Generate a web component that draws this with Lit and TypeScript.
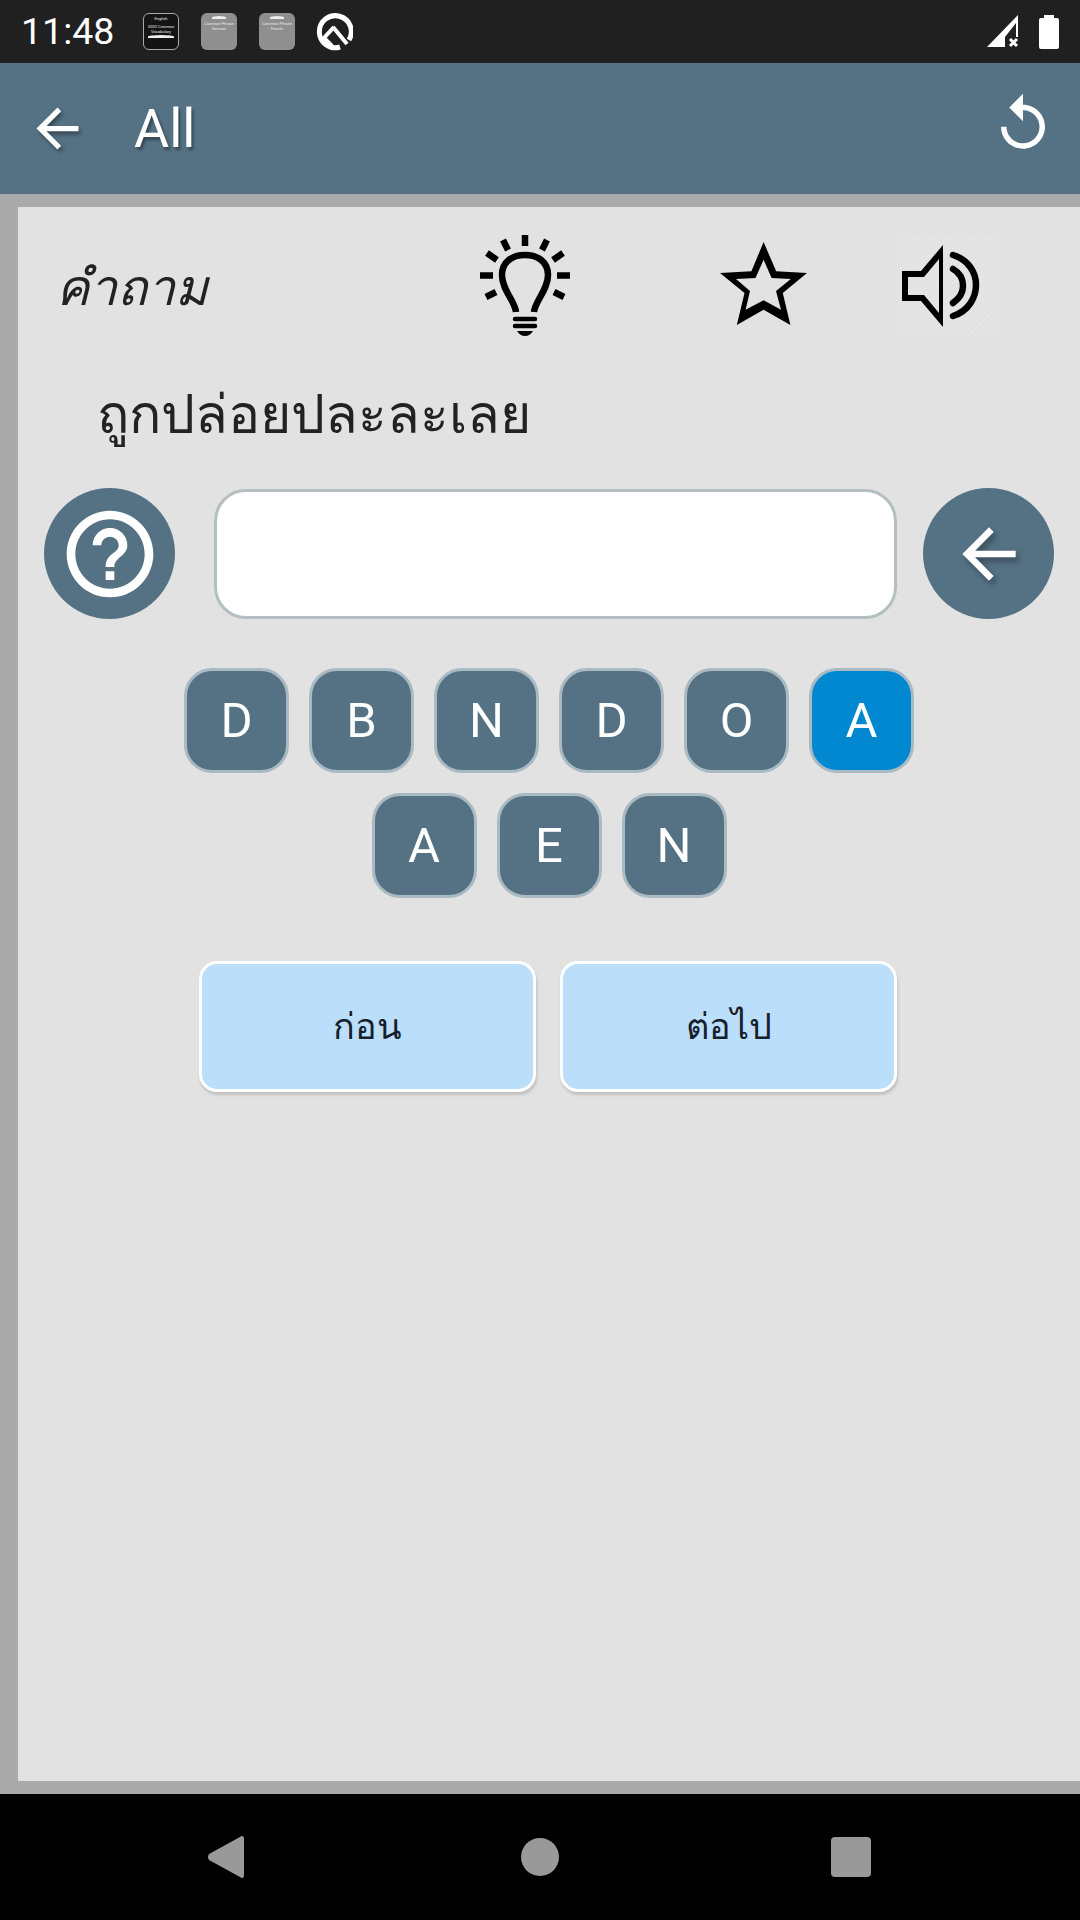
import { LitElement, html, css, svg } from 'lit';
import { customElement, state } from 'lit/decorators.js';

const ARROW = 'M20 11H7.830l5.590-5.590L12 4l-8 8 8 8 1.410-1.410L7.830 13H20v-2z';
const HELP = 'M11 18h2v-2h-2v2zm1-16C6.480 2 2 6.480 2 12s4.480 10 10 10 10-4.480 10-10S17.520 2 12 2zm0 18c-4.410 0-8-3.590-8-8s3.590-8 8-8 8 3.590 8 8-3.590 8-8 8zm0-14c-2.210 0-4 1.790-4 4h2c0-1.100.9-2 2-2s2 .9 2 2c0 2-3 1.750-3 5h2c0-2.250 3-2.500 3-5 0-2.210-1.790-4-4-4z';
const REPLAY = 'M12 5V1L7 6l5 5V7c3.310 0 6 2.690 6 6s-2.690 6-6 6-6-2.690-6-6H4c0 4.420 3.580 8 8 8s8-3.580 8-8-3.580-8-8-8z';

const bulb = svg`
  <g fill="none" stroke="#000" stroke-width="6.500">
    <path d="M36 77C35 66 22 55 22 40 22 27 32 20 45 20S68 27 68 40C68 55 55 66 54 77" />
    <path d="M45 0V11M0 40.500H13M77 40.500H90M23 5 28 15M67 5 62 15M7 18 17 25M83 18 73 25M6 62 16 57M84 62 74 57" />
    <path d="M35 84H55M35 91H55" stroke-width="4.500" stroke-linecap="round" />
  </g>
  <path d="M37 96H53Q50 101 45 101T37 96Z" />
`;

const star = svg`
  <path fill-rule="evenodd" d="M43.600 0 56.200 29.300 87 31 62.800 51 70.400 83 43.600 67.700 16.800 83 24.500 51 0 31 31.400 29.300ZM43.600 17.700 35.500 36 16 37 30 49 25.600 67.700 43.600 58.300 61 67.700 56 49 70.800 37 51.600 36Z" />
`;

const speaker = svg`
  <path fill-rule="evenodd" d="M7 36H26L48 10V92L26 66H7ZM13 42V60H29L44 78V24L29 42Z" />
  <path d="M58 20C74 25 81 38 81 50S74 76 58 81M58 34C65 38 68 44 68 51S65 63 58 68" fill="none" stroke="#000" stroke-width="6.500" stroke-linecap="round" />
`;

@customElement('app-root')
export class AppRoot extends LitElement {
  static styles = css`
    :host {
      display: block;
      font-family: Roboto, "Noto Sans", "DejaVu Sans", sans-serif;
    }
    .screen {
      width: 1080px;
      height: 1920px;
      display: flex;
      flex-direction: column;
      background: #aaa;
    }

    .status {
      height: 63px;
      background: #202020;
      color: #fff;
      display: flex;
      align-items: center;
      flex: none;
    }
    .time {
      font-size: 37.500px;
      margin-left: 21px;
      width: 122px;
      line-height: 63px;
    }
    .mini {
      width: 36px;
      height: 37px;
      margin-right: 22px;
      border-radius: 6px;
      background: #8f8f8f;
      color: #e8e8e8;
      font-size: 4px;
      line-height: 5px;
      text-align: center;
      display: flex;
      flex-direction: column;
      align-items: center;
      box-sizing: border-box;
      overflow: hidden;
      white-space: nowrap;
      padding-top: 3px;
    }
    .mini.dark {
      background: #141414;
      border: 1px solid #aaa;
      padding-top: 2px;
    }
    .mini .band {
      width: 14px;
      height: 3px;
      background: #eee;
      border-radius: 50% 50% 0 0;
      margin-bottom: 2px;
      flex: none;
    }
    .mini.dark .band {
      width: 26px;
      height: 3px;
      margin: 1px 0;
    }
    .mini .gap { height: 3px; flex: none; }
    .q { margin-left: -2px; }
    .status-right {
      margin-left: auto;
      display: flex;
      align-items: center;
      gap: 19px;
      margin-right: 21px;
    }

    .appbar {
      height: 131px;
      background: #557285;
      display: flex;
      align-items: center;
      flex: none;
      color: #fff;
    }
    .appbar .back {
      margin-left: 26px;
      width: 63px;
      height: 63px;
      fill: #fff;
      filter: drop-shadow(2px 3px 2px rgba(0, 0, 0, 0.4));
    }
    .appbar h1 {
      margin: 0 0 0 45px;
      font-size: 54px;
      font-weight: 400;
      text-shadow: 2px 3px 3px rgba(0, 0, 0, 0.4);
    }
    .appbar .replay {
      margin: 0 24px 10px auto;
      width: 66px;
      height: 66px;
      fill: #fff;
    }

    .body {
      flex: 1;
      padding: 13px 0 13px 18px;
      display: flex;
    }
    .panel {
      flex: 1;
      background: #e2e2e2;
      display: flex;
      flex-direction: column;
    }

    .tools {
      display: flex;
      align-items: flex-start;
      padding: 28px 0 0 38px;
      height: 102px;
    }
    .tools .label {
      width: 424px;
      font-size: 50px;
      font-style: italic;
      color: #222;
      line-height: 60px;
      margin-top: 23px;
    }
    .tools svg { display: block; flex: none; }
    .star { margin: 7px 0 0 150px; }
    .sound {
      margin-left: 88px;
      background: repeating-linear-gradient(135deg, #e2e2e2 0 2px, #e5e5e5 2px 4px);
    }

    .question {
      margin: 45px 0 0 79px;
      font-size: 53.500px;
      line-height: 66px;
      color: #222;
    }

    .answer {
      display: flex;
      align-items: center;
      margin: 40px 0 0 26px;
    }
    .round {
      width: 131px;
      height: 131px;
      border-radius: 50%;
      background: #557285;
      flex: none;
      padding: 0;
      border: 0;
      display: flex;
      align-items: center;
      justify-content: center;
      fill: #fff;
    }
    .round.next svg {
      filter: drop-shadow(3px 4px 3px rgba(0, 0, 0, 0.35));
    }
    .field {
      width: 683px;
      height: 130px;
      box-sizing: border-box;
      margin: 0 26px 0 39px;
      background: #fff;
      border: 3px solid #b4bfc2;
      border-radius: 32px;
    }

    .tiles {
      display: flex;
      flex-wrap: wrap;
      justify-content: center;
      gap: 20px;
      width: 730px;
      margin: 49px 0 0 166px;
    }
    .tile {
      width: 105px;
      height: 105px;
      box-sizing: border-box;
      padding: 0;
      border: 3px solid #a9bac3;
      border-radius: 28px;
      background: #557285;
      color: #fff;
      font: 400 49px Roboto, sans-serif;
      display: flex;
      align-items: center;
      justify-content: center;
    }
    .tile.active { background: #0288d1; }

    .nav-btns {
      display: flex;
      gap: 24px;
      margin: 63px 0 0 181px;
    }
    .nav-btns button {
      width: 337px;
      height: 131px;
      box-sizing: border-box;
      padding: 0;
      border: 3px solid #fff;
      border-radius: 18px;
      background: #bbdefb;
      color: #15202b;
      font: 400 36px Roboto, "Noto Sans", "DejaVu Sans", sans-serif;
      box-shadow: 1px 3px 3px rgba(0, 0, 0, 0.15);
    }

    .navbar {
      height: 126px;
      background: #000;
      flex: none;
      display: flex;
      align-items: center;
    }
    .navbar svg { fill: #999; display: block; flex: none; }
    .navbar .tri { margin-left: 207px; }
    .navbar .dot { margin-left: 277px; }
    .navbar .sq { margin-left: 272px; }
  `;

  @state() letters = ['D', 'B', 'N', 'D', 'O', 'A', 'A', 'E', 'N'];
  @state() activeIndex = 5;

  render() {
    return html`
      <div class="screen">
        <div class="status">
          <div class="time">11:48</div>
          <div class="mini dark">
            <div>English</div>
            <div class="gap"></div>
            <div>3000 Common</div>
            <div>Vocabulary</div>
            <div class="band"></div>
          </div>
          <div class="mini">
            <div class="band"></div>
            <div>Common Phrase</div>
            <div>German</div>
          </div>
          <div class="mini">
            <div class="band"></div>
            <div>Common Phrase</div>
            <div>French</div>
          </div>
          <svg class="q" width="38" height="38" viewBox="0 0 38 38" fill="none" stroke="#fff" stroke-width="5">
            <path d="M34 27A16 16 0 1 0 25 34" />
            <path d="M19 14 9 25 17 33" stroke-width="4" />
            <path d="M18 14 32 31" stroke-width="4" />
          </svg>
          <div class="status-right">
            <svg width="34" height="33" viewBox="0 0 34 33" fill="#fff">
              <path d="M1 32 32 0V22H30V8L19 22V32Z" />
              <path d="M24 24 31 31M31 24 24 31" stroke="#fff" stroke-width="3" />
            </svg>
            <svg width="20" height="34" viewBox="0 0 20 34" fill="#fff">
              <path d="M5 0H15V3H18Q20 3 20 5V32Q20 34 18 34H2Q0 34 0 32V5Q0 3 2 3H5Z" />
            </svg>
          </div>
        </div>

        <div class="appbar">
          <svg class="back" viewBox="0 0 24 24"><path d=${ARROW} /></svg>
          <h1>All</h1>
          <svg class="replay" viewBox="0 0 24 24"><path d=${REPLAY} /></svg>
        </div>

        <div class="body">
          <div class="panel">
            <div class="tools">
              <div class="label">คำถาม</div>
              <svg width="90" height="102" viewBox="0 0 90 102">${bulb}</svg>
              <svg class="star" width="87" height="84" viewBox="0 0 87 84">${star}</svg>
              <svg class="sound" width="104" height="102" viewBox="0 0 104 102">${speaker}</svg>
            </div>

            <div class="question">ถูกปล่อยปละละเลย</div>

            <div class="answer">
              <button class="round"><svg width="104" height="104" viewBox="0 0 24 24"><path d=${HELP} /></svg></button>
              <div class="field"></div>
              <button class="round next"><svg width="80" height="80" viewBox="0 0 24 24"><path d=${ARROW} /></svg></button>
            </div>

            <div class="tiles">
              ${this.letters.map(
                (l, i) => html`<button class="tile ${i === this.activeIndex ? 'active' : ''}">${l}</button>`
              )}
            </div>

            <div class="nav-btns">
              <button>ก่อน</button>
              <button>ต่อไป</button>
            </div>
          </div>
        </div>

        <div class="navbar">
          <svg class="tri" width="37" height="42" viewBox="0 0 37 42"><path d="M35 0Q37 0 37 3V39Q37 42 35 42 34 42 33 41L2 24Q0 21 2 18L33 1Q34 0 35 0Z" /></svg>
          <svg class="dot" width="38" height="38" viewBox="0 0 38 38"><circle cx="19" cy="19" r="19" /></svg>
          <svg class="sq" width="40" height="40" viewBox="0 0 40 40"><rect width="40" height="40" rx="4" /></svg>
        </div>
      </div>
    `;
  }
}
